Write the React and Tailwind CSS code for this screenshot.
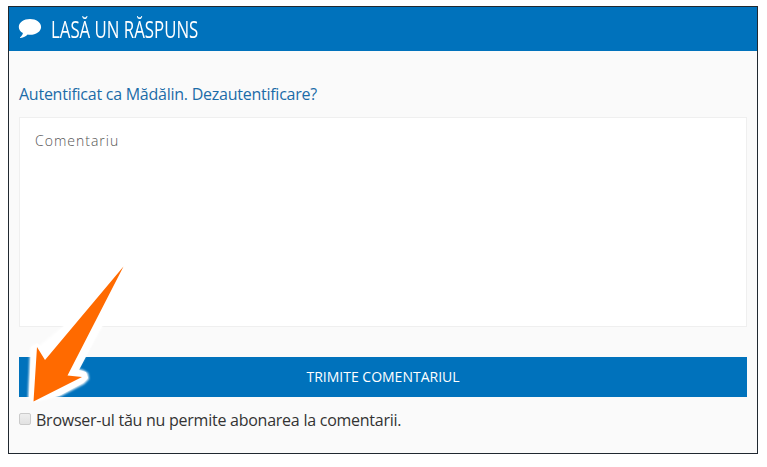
import { useState } from "react";

function CommentIcon() {
  return (
    <svg viewBox="0 0 24 22" className="h-[22px] w-[24px] shrink-0" fill="#fff">
      <path d="M12 1C5.800 1 .8 4.500 .8 8.900c0 2.500 1.600 4.700 4.100 6.200-.3 1.700-1.200 3-2.700 4.200-.4.400-.2.900.4.800 3-.4 5.300-1.600 7.100-3.500.8.100 1.600.2 2.300.2 6.100 0 11.100-3.500 11.100-7.900S18.100 1 12 1z" />
    </svg>
  );
}

function Arrow() {
  return (
    <svg viewBox="0 0 150 217" className="pointer-events-none absolute left-0 top-[250px] h-[217px] w-[150px]">
      <defs>
        <filter id="glow" x="-20%" y="-20%" width="140%" height="140%">
          <feGaussianBlur stdDeviation="1" />
        </filter>
      </defs>
      <path
        d="M112 28 L66 74 L39 96 L34 94 L30 98 L28 148 L33 152 L61 146 L84 134 L89 129 L88 123 L83 120 L78 119 L103 75 Z"
        fill="#fff"
        filter="url(#glow)"
      />
      <path
        d="M112 28 L66 74 L43 97 L37 93 L31 97 L29 148 L34 152 L59 146 L83 133 L88 128 L86 122 L79 120 L102 76 Z"
        fill="#fff"
      />
      <path d="M123.500 16.500 L45 110 L37 97 L33.500 151.500 L82 127 L67.500 125.500 Z" fill="#ff6a00" />
    </svg>
  );
}

export default function App() {
  const [comment, setComment] = useState("");
  const [subscribed, setSubscribed] = useState(false);

  return (
    <div className="relative h-[467px] w-[767px] overflow-hidden bg-white pl-2 pt-1.5 font-['Open_Sans',sans-serif]">
      <div className="h-[448px] w-[750px] border border-[#202830] bg-[#fafafa]">
        <div className="flex h-11 items-center bg-[#0072bc] pl-[9px]">
          <CommentIcon />
          <h3 className="ml-[9px] origin-left scale-x-[0.7] whitespace-nowrap text-[24px] font-normal leading-none text-white">
            LASĂ UN RĂSPUNS
          </h3>
        </div>

        <form className="flex flex-col px-2.5 pt-[31px]" onSubmit={(e) => e.preventDefault()}>
          <p className="h-[35px] text-[16px] leading-6 tracking-[-0.25px] text-[#1c6ca8]">
            <a href="#profile">Autentificat ca Mădălin</a>. <a href="#logout">Dezautentificare?</a>
          </p>

          <textarea
            value={comment}
            onChange={(e) => setComment(e.target.value)}
            placeholder="Comentariu"
            className="block h-[210px] w-full resize-none border border-[#efefef] bg-white px-[15px] py-3 text-[14px] font-light leading-[22px] tracking-[1px] text-[#555] outline-none placeholder:text-[#555]"
          />

          <button type="submit" className="mt-[30px] h-10 w-full bg-[#0072bc] pb-0.5 text-[14px] text-white">
            TRIMITE COMENTARIUL
          </button>

          <label className="mt-[11px] flex items-center text-[16px] leading-6 text-[#333]">
            <input
              type="checkbox"
              checked={subscribed}
              onChange={(e) => setSubscribed(e.target.checked)}
              className="mb-0.5 mr-[5px] h-3 w-3 appearance-none rounded-[2px] border border-[#cbcbcb] bg-linear-to-b from-[#eeeeee] to-[#e2e2e2]"
            />
            <span className="tracking-[-0.25px]">Browser-ul tău nu permite abonarea la comentarii.</span>
          </label>
        </form>
      </div>

      <Arrow />
    </div>
  );
}
